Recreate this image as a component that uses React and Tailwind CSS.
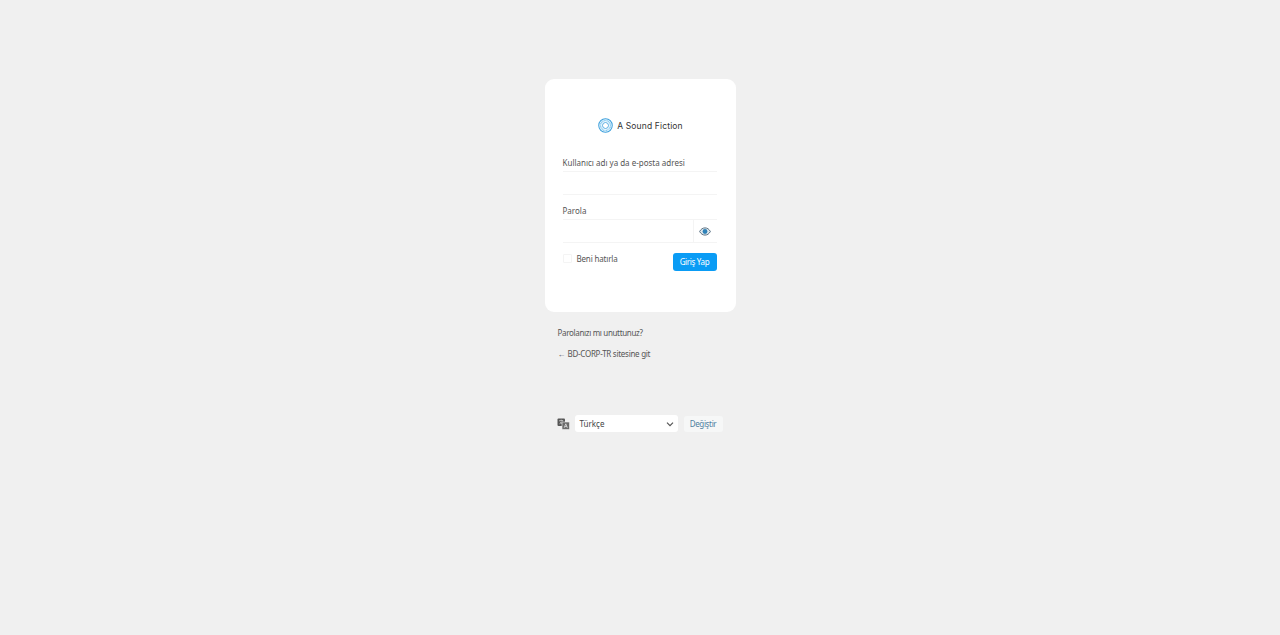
const inputBox = "h-6 border-y border-[#f4f4f4] bg-white";

function LogoMark() {
  return (
    <svg width="15" height="15" viewBox="0 0 16 16" fill="none" className="shrink-0">
      <circle cx="8" cy="8" r="7.2" stroke="#3b9fdc" strokeWidth="1.1" />
      <circle cx="8" cy="8" r="5.3" stroke="#8accf2" strokeWidth="1.6" strokeDasharray="1.2 0.4" />
      <circle cx="8" cy="8" r="3.2" stroke="#3b9fdc" strokeWidth="0.9" />
    </svg>
  );
}

function EyeIcon() {
  return (
    <svg width="12" height="9" viewBox="0 0 12 9" fill="none">
      <path d="M0.6 4.5C2 2 3.8 0.9 6 0.9S10 2 11.4 4.5C10 7 8.2 8.1 6 8.1S2 7 0.6 4.5Z" fill="#dfe7ec" stroke="#5d7486" strokeWidth="1" />
      <circle cx="6" cy="4.5" r="2.4" fill="#2f82b8" />
    </svg>
  );
}

function TranslateIcon() {
  return (
    <svg width="13" height="12" viewBox="0 0 13 12" fill="none">
      <rect x="0.5" y="0.5" width="7.5" height="7.5" rx="1" fill="#555" />
      <rect x="5" y="4" width="7.5" height="7.5" rx="1" fill="#6a6a6a" stroke="#f0f0f0" strokeWidth="0.6" />
      <path d="M2.2 2.6H6.2M4.2 1.6V2.6M5.4 2.6C5 4 3.9 5.2 2.4 5.9M3 3.6C3.5 4.6 4.3 5.3 5.2 5.7" stroke="#f0f0f0" strokeWidth="0.6" />
      <path d="M7.2 9.8L8.8 5.8L10.4 9.8M7.8 8.6H9.8" stroke="#f0f0f0" strokeWidth="0.7" />
    </svg>
  );
}

export default function App() {
  return (
    <div
      className="min-h-[635px] bg-[#f0f0f0] flex flex-col items-center pt-[79px] text-[#555]"
      style={{ fontFamily: '"Noto Sans", "Open Sans", sans-serif' }}
    >
      {/* Login card */}
      <div className="w-[191px] h-[233px] bg-white rounded-[9px] pl-[18px] pr-[19px] pt-[38px]">
        <div className="flex items-center justify-center gap-[4px] h-[17px] pl-[2px]">
          <LogoMark />
          <span className="text-[8.5px] leading-none tracking-[0.15px] text-[#333] mt-px" style={{ fontFamily: "Inter, sans-serif" }}>
            A Sound Fiction
          </span>
        </div>

        <form className="mt-[23px]">
          <label className="block text-[8px] leading-[12px]">Kullanıcı adı ya da e-posta adresi</label>
          <div className={`mt-[2px] ${inputBox}`} />

          <label className="block text-[8px] leading-[12px] mt-[10px]">Parola</label>
          <div className={`mt-[2px] ${inputBox} flex justify-end`}>
            <div className="w-6 flex items-center justify-center border-l border-[#f4f4f4]">
              <EyeIcon />
            </div>
          </div>

          <div className="flex justify-between mt-[10px]">
            <label className="flex items-center gap-[5px] h-[11px]">
              <span className="w-[9px] h-[9px] border border-[#f4f4f4] rounded-[1px]" />
              <span className="text-[8px] tracking-[-0.17px] leading-[11px]">Beni hatırla</span>
            </label>
            <button type="button" className="w-11 h-[18px] bg-[#0a9cf5] rounded-[3px] text-white text-[8px] tracking-[-0.33px] leading-none">
              Giriş Yap
            </button>
          </div>
        </form>
      </div>

      {/* Links */}
      <div className="w-[191px] pl-[13px] mt-[15px] text-[8px] tracking-[-0.33px] leading-3">
        <p>Parolanızı mı unuttunuz?</p>
        <p className="mt-[9px] flex items-center gap-[3px]">
          <span className="w-[7px] text-center tracking-normal">←</span>
          <span className="tracking-[-0.27px]">BD-CORP-TR sitesine git</span>
        </p>
      </div>

      {/* Language switcher */}
      <div className="w-[191px] pl-[12px] mt-[55px] flex items-center">
        <TranslateIcon />
        <div className="ml-[5px] w-[103px] h-[17px] bg-white rounded-[3px] flex items-center justify-between pl-[5px] pr-[4px]">
          <span className="text-[8px] leading-none text-[#444] mt-px">Türkçe</span>
          <svg width="8" height="8" viewBox="0 0 8 8" fill="none">
            <path d="M1 2.6L4 5.6L7 2.6" stroke="#555" strokeWidth="1.2" />
          </svg>
        </div>
        <button type="button" className="ml-[6px] w-[39px] h-[16px] bg-[#f6f7f7] rounded-[3px] text-[8px] tracking-[-0.35px] leading-none text-[#4f7f9f]">
          Değiştir
        </button>
      </div>
    </div>
  );
}
